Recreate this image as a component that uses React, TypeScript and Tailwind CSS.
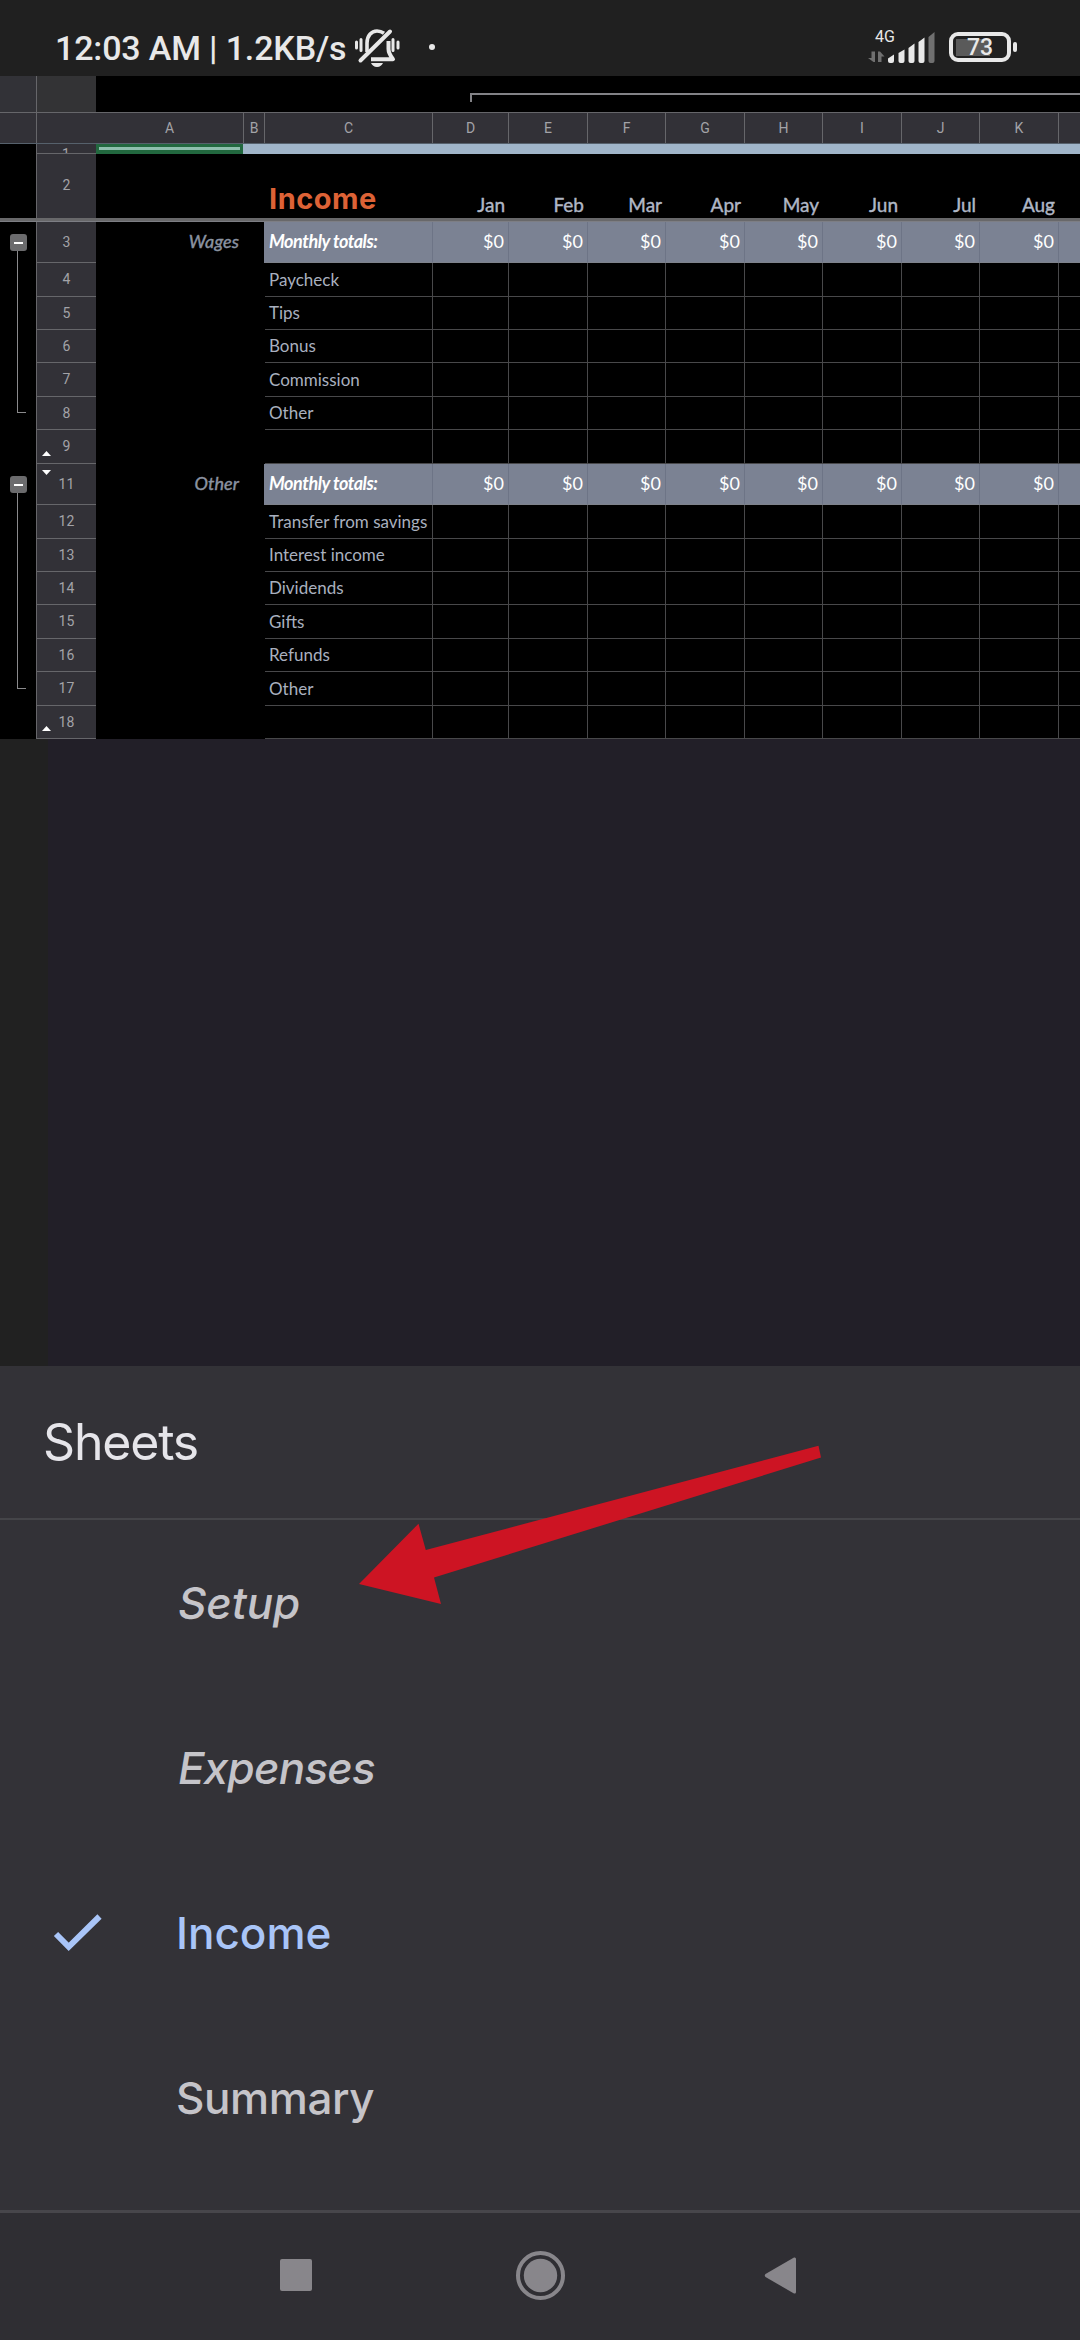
import React from "react";
import clsx from "clsx";

const GRID =
  "grid grid-cols-[37px_59px_148px_21px_168px_76px_79px_78px_79px_78px_79px_78px_79px_21px]";

const LETTERS = ["A", "B", "C", "D", "E", "F", "G", "H", "I", "J", "K"];
const MONTHS = ["Jan", "Feb", "Mar", "Apr", "May", "Jun", "Jul", "Aug"];

type SheetRow = {
  num: number;
  height: string;
  label?: string;
  group?: string;
  arrow?: "up" | "down";
};

const WAGES: SheetRow[] = [
  { num: 3, height: "h-[41px]", label: "Monthly totals:", group: "Wages" },
  { num: 4, height: "h-[34px]", label: "Paycheck" },
  { num: 5, height: "h-[33px]", label: "Tips" },
  { num: 6, height: "h-[33px]", label: "Bonus" },
  { num: 7, height: "h-[34px]", label: "Commission" },
  { num: 8, height: "h-[33px]", label: "Other" },
  { num: 9, height: "h-[34px]", arrow: "up" },
];

const OTHER: SheetRow[] = [
  { num: 11, height: "h-[41px]", label: "Monthly totals:", group: "Other", arrow: "down" },
  { num: 12, height: "h-[34px]", label: "Transfer from savings" },
  { num: 13, height: "h-[33px]", label: "Interest income" },
  { num: 14, height: "h-[33px]", label: "Dividends" },
  { num: 15, height: "h-[34px]", label: "Gifts" },
  { num: 16, height: "h-[33px]", label: "Refunds" },
  { num: 17, height: "h-[34px]", label: "Other" },
  { num: 18, height: "h-[33px]", arrow: "up" },
];

const StatusBar = () => (
  <div className="flex h-[76px] bg-[#202020] pl-[55px] text-[#e8e8e8]">
    <span className="w-[298px] whitespace-nowrap pt-[28px] text-[34px] leading-[40px] font-medium tracking-[-0.15px]">
      12:03 AM | 1.2KB/s
    </span>
    {/* Muted bell */}
    <svg className="mt-[27px] h-[42px] w-[50px]" viewBox="353 27 50 42" fill="none" stroke="#e8e8e8">
      <path d="M367 52V43C367 35.500 371.500 31 377 31c3 0 5 .8 7 2.200" strokeWidth="3.600" />
      <path d="M388.500 41v8c0 4 2 7 4.500 10.200H371" strokeWidth="4" strokeLinejoin="round" />
      <path d="M360.500 60.500L390 31.500" strokeWidth="4" strokeLinecap="round" />
      <path d="M371 63h12c-1 2.300-3 4-6 4s-5-1.700-6-4z" fill="#e8e8e8" stroke="none" />
      <path d="M356.500 42v6M361 39.500v11M393 39.500v11M398 42v6" strokeWidth="3" strokeLinecap="round" />
    </svg>
    <span className="mt-[44px] ml-[26px] h-[6px] w-[6px] rounded-full bg-[#e8e8e8]" />
    <div className="ml-[433px] flex w-[67px] flex-col">
      <span className="pt-[28px] pl-[7px] text-[16px] leading-[18px]">4G</span>
    </div>
    <svg className="mt-[27px] -ml-[67px] h-[42px] w-[72px]" viewBox="868 27 72 42">
      <path d="M868 58h3.500v-6.500h3.500V62h-1.500zM878 51.500h2l4.500 5h-3V62H878z" fill="#707070" />
      <path d="M888 61v-2.500l6-4V61a2 2 0 0 1-2 2h-2a2 2 0 0 1-2-2z" fill="#e8e8e8" />
      <path d="M898.500 53l6-3.500V61a2 2 0 0 1-2 2h-2a2 2 0 0 1-2-2z" fill="#e8e8e8" />
      <path d="M908.500 48l6-4.500V61a2 2 0 0 1-2 2h-2a2 2 0 0 1-2-2z" fill="#e8e8e8" />
      <path d="M918.500 42l6-4.500V61a2 2 0 0 1-2 2h-2a2 2 0 0 1-2-2z" fill="#e8e8e8" />
      <path d="M928.500 37l6-5V61a2 2 0 0 1-2 2h-2a2 2 0 0 1-2-2z" fill="#707070" />
    </svg>
    <div className="mt-[32px] ml-[9px] flex h-[30px] w-[62px] items-center justify-center rounded-[9px] border-4 border-[#e8e8e8] bg-[linear-gradient(#5a5a5a,#5a5a5a)] bg-[length:34px_17px] bg-[position:3px_center] bg-no-repeat">
      <span className="pt-px text-[23px] leading-[22px] font-medium">73</span>
    </div>
    <span className="mt-[42px] ml-[2px] h-[10px] w-[4px] rounded-[2px] bg-[#e8e8e8]" />
  </div>
);

const ColumnHeader = () => (
  <>
    {/* Column group strip */}
    <div className="flex h-[37px] border-b border-[#66666a]">
      <div className="w-[37px] border-r border-[#66666a] bg-[#323237]" />
      <div className="w-[59px] bg-[#333335]" />
      <div className="flex-1 pt-[17px] pl-[374px]">
        <div className="h-[9px] border-t-2 border-l-2 border-[#828286]" />
      </div>
    </div>
    <div className={clsx(GRID, "h-[31px] border-b border-[#56616c] bg-[#323137] text-[14px] text-[#a3a3a8]")}>
      <div className="border-r border-[#66666a]" />
      <div />
      {LETTERS.map((letter) => (
        <div key={letter} className="flex items-center justify-center border-r border-[#66666a]">
          {letter}
        </div>
      ))}
      <div />
    </div>
  </>
);

const FrozenRows = () => (
  <>
    <div className="flex h-[10px]">
      <div className="w-[37px] border-r border-[#66666a]" />
      <div className="w-[59px] overflow-hidden border-b border-[#66666a] bg-[#323137] pt-px pr-px text-center text-[14px] leading-[18px] text-[#a3a3a8]">
        1
      </div>
      <div className="w-[147px] border-[3px] border-b-[4px] border-[#22683f] bg-[#8fc0ae]" />
      <div className="flex-1 bg-[#a0b5c9]" />
    </div>
    <div className={clsx(GRID, "h-[64px]")}>
      <div className="border-r border-[#66666a]" />
      <div className="flex items-center justify-center bg-[#323137] pb-px text-[14px] text-[#a3a3a8]">2</div>
      <div />
      <div />
      <div className="pt-[27px] pl-[4px] font-['Inter',sans-serif] text-[29px] leading-[36px] font-bold tracking-[0.5px] text-[#dd6236]">
        Income
      </div>
      {MONTHS.map((month) => (
        <div
          key={month}
          className="pt-[39px] pr-[4px] text-right font-['Lato',sans-serif] text-[19px] leading-[24px] text-[#b0b7c6] [-webkit-text-stroke:0.4px_#b0b7c6]"
        >
          {month}
        </div>
      ))}
    </div>
    <div className="h-[4px] border-b border-[#7d7e84] bg-[#68686a]" />
  </>
);

const Row = ({ num, height, label, group, arrow }: SheetRow) => {
  const total = Boolean(group);
  const cell = total ? "border-[#6d7486] border-b-[#7f838c] bg-[#7b8293] pb-px" : "border-[#48484a]";

  return (
    <div className={clsx(GRID, height, "font-['Lato',sans-serif]")}>
      <div className="border-r border-[#66666a]" />
      <div className="relative flex items-center justify-center border-b border-[#66666a] bg-[#323137] font-['Roboto',sans-serif] text-[14px] tracking-[0.2px] text-[#a3a3a8]">
        {num}
        {arrow === "up" && (
          <svg className="absolute bottom-[7px] left-[5px] h-[5px] w-[9px]" viewBox="0 0 9 5">
            <path d="M0 5L4.500 0L9 5z" fill="#fff" />
          </svg>
        )}
        {arrow === "down" && (
          <svg className="absolute top-[6px] left-[5px] h-[5px] w-[9px]" viewBox="0 0 9 5">
            <path d="M0 0L4.500 5L9 0z" fill="#fff" />
          </svg>
        )}
      </div>
      <div className="flex items-center justify-end pr-[5px] pb-[2px] text-[18px] tracking-[0.1px] text-[#8b93a2] italic [-webkit-text-stroke:0.4px_#8b93a2]">
        {group}
      </div>
      <div className={clsx(total && "border-r border-[#7b8293]")} />
      <div
        className={clsx(
          "flex items-center border-r border-b pl-[4px] whitespace-nowrap",
          cell,
          total ? "text-[18px] font-bold tracking-[-0.45px] text-white italic" : "text-[17px] text-[#a9b0bf]"
        )}
      >
        {label}
      </div>
      {MONTHS.map((month) => (
        <div
          key={month}
          className={clsx("flex items-center justify-end border-r border-b pr-[4px] text-[18px] text-white", cell)}
        >
          {total && "$0"}
        </div>
      ))}
      <div className={clsx("border-b", cell)} />
    </div>
  );
};

const RowGroup = ({ rows, bracket }: { rows: SheetRow[]; bracket: string }) => (
  <div className="relative">
    {rows.map((row) => (
      <Row key={row.num} {...row} />
    ))}
    {/* Collapse handle over the gutter */}
    <div className="absolute top-[12px] left-[10px]">
      <div className="flex h-[17px] w-[17px] items-center justify-center rounded-[3px] bg-[#6b6b6d]">
        <div className="h-[2px] w-[9px] bg-white" />
      </div>
      <div className={clsx("ml-[7px] w-[9px] border-b border-l border-[#8a8a8c]", bracket)} />
    </div>
  </div>
);

const SHEETS = [
  { name: "Setup", className: "pl-[2px] italic text-[#c5c4c9] tracking-[-0.1px]" },
  { name: "Expenses", className: "pl-[2px] italic text-[#c5c4c9] tracking-[-0.8px]" },
  { name: "Income", className: "text-[#a9c5f8]", selected: true },
  { name: "Summary", className: "text-[#c5c4c9] tracking-[-0.4px]" },
];

const SheetPicker = () => (
  <div className="relative h-[847px] border-b-[3px] border-[#47464b] bg-[#333237] font-['Inter',sans-serif]">
    <div className="flex h-[154px] items-center border-b-2 border-[#454549] pl-[43px]">
      <h2 className="text-[50px] tracking-[-1.2px] text-[#e6e5ea]">Sheets</h2>
    </div>
    {SHEETS.map((sheet) => (
      <div key={sheet.name} className="flex h-[165px] items-center">
        <div className="w-[176px] pl-[52px]">
          {sheet.selected && (
            <svg className="h-[40px] w-[52px]" viewBox="52 1913 52 40" fill="none">
              <path d="M56 1934L68.700 1946.800L99.500 1916.500" stroke="#a9c5f8" strokeWidth="6" />
            </svg>
          )}
        </div>
        <span className={clsx("text-[44px] font-medium", sheet.className)}>{sheet.name}</span>
      </div>
    ))}
    {/* Pointer to the Setup sheet */}
    <svg className="absolute top-[74px] left-[350px] h-[170px] w-[480px]" viewBox="350 1440 480 170">
      <path d="M359 1584L418.500 1523.700L425.800 1550L818.500 1445.800L821 1457.500L434 1577.500L441 1604z" fill="#cd1423" />
    </svg>
  </div>
);

const NavBar = () => (
  <div className="flex h-[127px] bg-[#2f2e33] pt-[38px]">
    <svg className="ml-[270px] h-[50px] w-[540px]" viewBox="270 2251 540 50" fill="#88868b">
      <rect x="280" y="2259" width="32" height="32" rx="2" />
      <circle cx="540.500" cy="2275.500" r="16.700" />
      <circle cx="540.500" cy="2275.500" r="22.500" fill="none" stroke="#88868b" strokeWidth="4" />
      <path d="M765.500 2274L794 2257.500Q796 2257 796 2259V2292Q796 2294 794 2293.500L765.500 2277Q764 2275.500 765.500 2274z" />
    </svg>
  </div>
);

export default function App() {
  return (
    <div className="flex h-[2340px] w-[1080px] flex-col overflow-hidden bg-black font-['Roboto',sans-serif]">
      <StatusBar />
      <ColumnHeader />
      <FrozenRows />
      <RowGroup rows={WAGES} bracket="h-[162px]" />
      <RowGroup rows={OTHER} bracket="h-[196px]" />
      <div className="flex-1 bg-[linear-gradient(90deg,#212121_48px,#221f28_48px)]" />
      <SheetPicker />
      <NavBar />
    </div>
  );
}
